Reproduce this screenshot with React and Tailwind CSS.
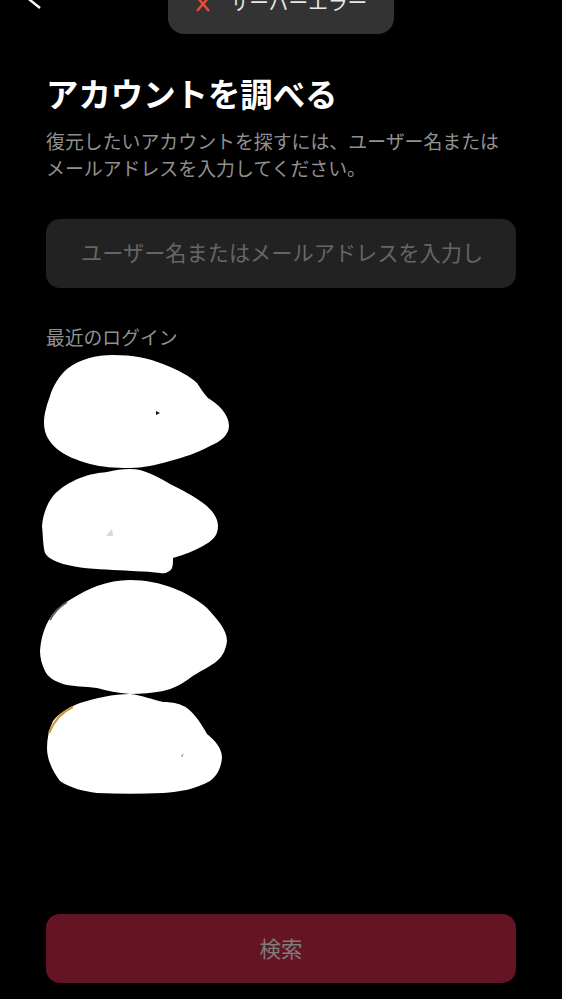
const font = { fontFamily: '"Noto Sans CJK JP", sans-serif' };

function Scribbles() {
  return (
    <svg className="block -ml-4 -mt-[5px]" width="210" height="460" viewBox="30 345 210 460" fill="#fff">
      <path d="M113 354 C133 354 148 357 163 363 C178 369 190 375 197 382 C201 388 204 393 208 397 C218 403 229 413 229 425 C229 434 220 441 210 445 C197 452 185 456 170 460 C156 464 143 467 130 467 C114 467 102 466 90 463 C76 459 66 455 57 448 C49 441 44 433 44 422 C44 412 47 404 50 395 C53 385 59 375 67 368 C80 358 96 354 113 354Z" />
      <path d="M130 468 C145 468 158 476 170 483 C182 489 194 495 203 502 C211 508 218 516 218 525 C218 535 212 540 203 545 C194 550 184 554 173 557 C173 561 173 564 172 567 C170 571 165 573 160 572 C145 570 128 570 113 569 C95 568 78 567 63 563 C54 560 48 557 45 552 C43 545 43 535 42 525 C43 513 47 503 53 495 C60 487 70 481 80 477 C90 473 98 472 107 471 C115 469 122 468 130 468Z" />
      <path d="M130 579 C146 579 160 582 173 587 C186 592 198 599 207 607 C216 617 227 628 227 640 C226 648 223 655 217 660 C210 666 198 671 190 677 C182 683 173 688 163 690 C153 692 141 693 130 693 C118 692 107 690 97 687 C85 685 73 686 63 683 C54 680 48 676 45 670 C42 664 40 657 40 650 C41 637 44 627 50 617 C56 608 64 602 73 597 C81 592 89 588 97 585 C108 581 119 579 130 579Z" />
      <path d="M130 693 C142 694 153 699 163 701 C173 701 181 703 187 707 C196 714 202 724 207 733 C214 739 222 746 222 757 C221 767 217 775 210 780 C196 788 180 791 163 792 C141 793 119 793 97 792 C83 790 70 787 60 780 C54 772 47 760 47 747 C47 737 49 728 53 720 C60 711 70 706 80 702 C96 697 113 693 130 693Z" />
      <path d="M67 601 Q55 609 50 619" fill="none" stroke="#6b5a66" strokeWidth="2" />
      <path d="M73 706 Q57 713 49 732" fill="none" stroke="#c9983f" strokeWidth="2" />
      <path d="M156 410 L160 412 L156 414Z" fill="#111" />
      <path d="M106 535 L112 528 L113 535Z" fill="#d8d8d8" />
      <path d="M181 755 L184 752 L182 756Z" fill="#777" />
    </svg>
  );
}

export default function App() {
  return (
    <div className="relative w-[562px] h-[999px] overflow-hidden bg-black flex flex-col px-[46px]" style={font}>
      {/* back chevron, cut off by the top of the screen */}
      <div className="h-[74px] -ml-[46px] pl-[28px] -mt-[2px]">
        <svg width="16" height="12" viewBox="0 0 16 12" fill="none" stroke="#fff" strokeWidth="2.4">
          <path d="M-2 -1.2 L12 10" />
        </svg>
      </div>

      {/* toast */}
      <div className="absolute left-[168px] top-[-30px] w-[226px] h-[64px] rounded-[16px] bg-[#333333] flex items-end justify-center gap-[19px] pb-[20px]">
        <svg width="16" height="16" viewBox="0 0 16 16" fill="none" stroke="#f04a38" strokeWidth="2.4" className="mb-[2px] shrink-0">
          <path d="M2 1 L14 15 M14 1 L2 15" />
        </svg>
        <span className="text-[19.7px] leading-[24px] text-[#e8e8e8] whitespace-nowrap">サーバーエラー</span>
      </div>

      <h1 className="text-[32.4px] leading-[42px] font-bold text-white">アカウントを調べる</h1>
      <p className="mt-[13px] text-[18.9px] leading-[27px] text-[#919191]">
        復元したいアカウントを探すには、ユーザー名または
        <br />
        メールアドレスを入力してください。
      </p>

      <input
        readOnly
        placeholder="ユーザー名またはメールアドレスを入力してください"
        className="mt-[38px] h-[69px] w-[470px] shrink-0 rounded-[14px] bg-[#222222] pl-[35px] pr-[34px] pb-[4px] text-[21.2px] outline-none placeholder:text-[#666666]"
        style={font}
      />

      <div className="mt-[35px] text-[18.8px] leading-[28px] text-[#919191]">最近のログイン</div>
      <Scribbles />

      <button
        type="button"
        className="mt-auto mb-[16px] h-[69px] w-[470px] shrink-0 rounded-[14px] bg-[#651423] text-[21.5px] text-[#7d7d7d]"
      >
        検索
      </button>
    </div>
  );
}
